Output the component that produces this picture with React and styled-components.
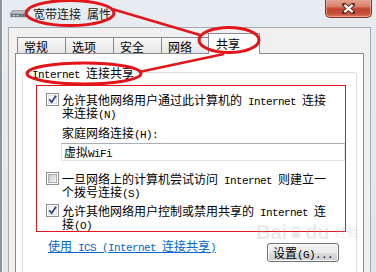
import React from "react";
import styled, { createGlobalStyle } from "styled-components";

const GlobalStyle = createGlobalStyle`
  html, body {
    margin: 0;
    padding: 0;
    background: #ffffff;
  }
  body {
    font-family: "Noto Sans CJK SC", "Liberation Sans", sans-serif;
    font-size: 12px;
    color: #000;
  }
`;

const Window = styled.div`
  position: relative;
  width: 376px;
  height: 272px;
  overflow: hidden;
  display: flex;
  flex-direction: column;
  background: linear-gradient(to bottom, #e7ecf1, #dfe5eb);
  box-shadow: inset 2px 0 0 #8e949b, inset 3px 0 0 #f4f6f8;
`;

const TitleBar = styled.div`
  height: 27px;
  display: flex;
  align-items: flex-start;
  flex: none;
`;

const AppIconSvg = styled.svg`
  margin-left: 10px;
  margin-top: 10px;
  flex: none;
`;

const TitleText = styled.div`
  margin-left: 3px;
  margin-top: 7px;
  font-size: 12px;
  line-height: 13px;
  color: #1a1a1a;
`;

const CloseButton = styled.div`
  margin-left: auto;
  margin-right: 4px;
  margin-top: -1px;
  width: 47px;
  height: 19px;
  box-sizing: border-box;
  border: 1px solid #8a3424;
  border-top: none;
  border-radius: 0 0 5px 5px;
  background: linear-gradient(
    to bottom,
    #e7a797 0%,
    #d8826d 40%,
    #c2442f 55%,
    #c64f3a 80%,
    #d77b63 100%
  );
  box-shadow: inset 0 0 0 1px rgba(255, 210, 200, 0.45);
  display: flex;
  align-items: center;
  justify-content: center;
`;

const Client = styled.div`
  flex: 1;
  min-height: 0;
  margin: 0 5px 0 8px;
  border: 1px solid #a3abb4;
  border-bottom: none;
  background: #f0f0f0;
  padding: 5px 6px 0 6px;
  display: flex;
  flex-direction: column;
`;

const TabRow = styled.div`
  height: 21px;
  display: flex;
  align-items: flex-start;
  padding-left: 2px;
  margin-bottom: -1px;
  position: relative;
  z-index: 1;
  flex: none;
`;

const Tab = styled.div`
  box-sizing: border-box;
  width: ${p => (p.$active ? "52px" : "49px")};
  height: ${p => (p.$active ? "21px" : "16px")};
  margin-top: ${p => (p.$active ? "0" : "4px")};
  margin-left: ${p => (p.$first ? "0" : p.$active ? "-2px" : "-1px")};
  padding: ${p => (p.$active ? "3px 0 0 7px" : "2px 0 0 6px")};
  border: 1px solid #898c95;
  border-bottom: none;
  background: ${p =>
    p.$active ? "#ffffff" : "linear-gradient(to bottom, #f7f7f7, #e6e6e6)"};
  position: relative;
  z-index: ${p => (p.$active ? 2 : 1)};
  font-size: 12px;
  line-height: 13px;
  white-space: nowrap;
`;

const Panel = styled.div`
  flex: 1;
  min-height: 0;
  background: #ffffff;
  border: 1px solid #898c95;
  border-bottom: none;
  padding: 12px 6px 0 6px;
`;

const GroupBox = styled.fieldset`
  margin: 0;
  padding: 0;
  min-width: 0;
  border: 1px solid #d5dfe5;
  border-radius: 3px;
`;

const Legend = styled.legend`
  margin-left: 7px;
  padding: 0 2px;
  font-size: 12px;
  line-height: 13px;
`;

const GroupBody = styled.div`
  padding: 6px 10px 30px 13px;
`;

const Highlight = styled.div`
  border: 1px solid #e3151b;
  padding: 7px 0 1px 9px;
`;

const OptionRow = styled.div`
  display: flex;
  align-items: flex-start;
  gap: 3px;
  margin-top: ${p => p.$gap || 0}px;
`;

const OptionText = styled.div`
  width: 270px;
  line-height: 13px;
  font-size: 12px;
`;

const CheckFrame = styled.span`
  position: relative;
  flex: none;
  box-sizing: border-box;
  width: 13px;
  height: 13px;
  padding: 1px;
  border: 1px solid #8e8f8f;
  background: #ffffff;
  display: flex;
`;

const CheckFill = styled.span`
  flex: 1;
  border: 1px solid ${p => (p.$checked ? "#dcdfe3" : "#a9acb0")};
  background: ${p =>
    p.$checked
      ? "#fafafa"
      : "linear-gradient(135deg, #c6c8cc 0%, #e3e4e6 60%, #f6f6f6 100%)"};
`;

const Tick = styled.svg`
  position: absolute;
  left: 0;
  top: 0;
`;

const SubBlock = styled.div`
  margin-left: 16px;
  margin-top: 7px;
`;

const FieldLabel = styled.div`
  line-height: 13px;
`;

const ComboInput = styled.div`
  margin-top: 4px;
  height: 18px;
  box-sizing: border-box;
  margin-left: -1px;
  border: 1px solid #e2e6ea;
  border-top-color: #abadb3;
  border-left-color: #dbdfe6;
  padding-left: 2px;
  line-height: 15px;
  background: #ffffff;
`;

const Footer = styled.div`
  display: flex;
  align-items: flex-start;
  margin-top: 7px;
  padding-left: 12px;
`;

const Link = styled.a`
  color: #0066cc;
  text-decoration: underline;
  line-height: 13px;
  cursor: pointer;
`;

const Button = styled.button`
  margin-left: auto;
  margin-right: 7px;
  margin-top: 4px;
  width: 72px;
  height: 19px;
  padding: 0;
  border: 1px solid #707070;
  border-radius: 3px;
  background: linear-gradient(
    to bottom,
    #f2f2f2 0%,
    #ebebeb 50%,
    #dddddd 51%,
    #cfcfcf 100%
  );
  box-shadow: inset 0 0 0 1px #fcfcfc;
  font-family: "Noto Sans CJK SC", "Liberation Sans", sans-serif;
  font-size: 12px;
  line-height: 15px;
  color: #000;
`;

const Mono = styled.span`
  font-family: "Liberation Mono", "DejaVu Sans Mono", monospace;
  font-size: 11px;
  line-height: 0;
  letter-spacing: -0.6px;
  white-space: pre;
`;

const Overlay = styled.svg`
  position: absolute;
  left: 0;
  top: 0;
  pointer-events: none;
  z-index: 5;
`;

const Watermark = styled.div`
  position: absolute;
  left: 256px;
  top: 222px;
  display: flex;
  align-items: center;
  gap: 2px;
  color: rgba(170, 170, 170, 0.25);
  pointer-events: none;
  z-index: 4;
`;

const MarkLatin = styled.span`
  font-family: "Liberation Sans", sans-serif;
  font-weight: bold;
  font-size: 20px;
  line-height: 20px;
`;

const MarkCjk = styled.span`
  font-size: 12px;
  line-height: 14px;
  margin-left: 3px;
`;

function AppIcon() {
  return (
    <AppIconSvg width="20" height="8" viewBox="0 0 20 8">
      <polygon points="3,0 20,0 17,4 0,4" fill="#b9c0c8" stroke="#7d8690" strokeWidth="0.8" />
      <rect x="0.5" y="4" width="16.5" height="3.2" fill="#6f7983" />
      <rect x="3" y="5" width="2" height="1.2" fill="#cfe7c2" />
      <rect x="6.5" y="5" width="2" height="1.2" fill="#cfe7c2" />
    </AppIconSvg>
  );
}

function CheckBox({ checked }) {
  return (
    <CheckFrame>
      <CheckFill $checked={checked} />
      {checked && (
        <Tick width="11" height="11" viewBox="0 0 11 11">
          <path
            d="M2.4 5.3 L4.6 8.2 L9 1.8"
            fill="none"
            stroke="#2e4282"
            strokeWidth="1.8"
            strokeLinejoin="round"
          />
        </Tick>
      )}
    </CheckFrame>
  );
}

const tabs = ["常规", "选项", "安全", "网络", "共享"];

export default function App() {
  return (
    <>
      <GlobalStyle />
      <Window>
        <TitleBar>
          <AppIcon />
          <TitleText>
            宽带连接<Mono> </Mono>属性
          </TitleText>
          <CloseButton>
            <svg width="13" height="11" viewBox="0 0 13 11">
              <path d="M2 1.5 L11 9.5 M11 1.5 L2 9.5" stroke="#5d2219" strokeWidth="4" strokeLinecap="round" />
              <path d="M2.3 1.8 L10.7 9.2 M10.7 1.8 L2.3 9.2" stroke="#ffffff" strokeWidth="2.2" />
            </svg>
          </CloseButton>
        </TitleBar>
        <Client>
          <TabRow>
            {tabs.map((t, i) => (
              <Tab key={t} $first={i === 0} $active={t === "共享"}>
                {t}
              </Tab>
            ))}
          </TabRow>
          <Panel>
            <GroupBox>
              <Legend>
                <Mono>Internet </Mono>连接共享
              </Legend>
              <GroupBody>
                <Highlight>
                  <OptionRow>
                    <CheckBox checked />
                    <OptionText>
                      允许其他网络用户通过此计算机的<Mono> Internet </Mono>连接来连接<Mono>(N)</Mono>
                    </OptionText>
                  </OptionRow>
                  <SubBlock>
                    <FieldLabel>
                      家庭网络连接<Mono>(H):</Mono>
                    </FieldLabel>
                    <ComboInput>
                      虚拟<Mono>WiFi</Mono>
                    </ComboInput>
                  </SubBlock>
                  <OptionRow $gap={11}>
                    <CheckBox />
                    <OptionText>
                      一旦网络上的计算机尝试访问<Mono> Internet </Mono>则建立一个拨号连接<Mono>(S)</Mono>
                    </OptionText>
                  </OptionRow>
                  <OptionRow $gap={6}>
                    <CheckBox checked />
                    <OptionText>
                      允许其他网络用户控制或禁用共享的<Mono> Internet </Mono>连接<Mono>(O)</Mono>
                    </OptionText>
                  </OptionRow>
                </Highlight>
                <Footer>
                  <Link>
                    使用<Mono> ICS (Internet </Mono>连接共享<Mono>)</Mono>
                  </Link>
                  <Button>
                    设置<Mono>(G)...</Mono>
                  </Button>
                </Footer>
              </GroupBody>
            </GroupBox>
          </Panel>
        </Client>

        <Watermark>
          <MarkLatin>Bai</MarkLatin>
          <svg width="14" height="14" viewBox="0 0 14 14" fill="rgba(170,170,170,0.25)">
            <ellipse cx="7" cy="10" rx="4" ry="3.2" />
            <circle cx="2.5" cy="6" r="1.6" />
            <circle cx="5.2" cy="3" r="1.6" />
            <circle cx="8.8" cy="3" r="1.6" />
            <circle cx="11.5" cy="6" r="1.6" />
          </svg>
          <MarkLatin>du</MarkLatin>
          <MarkCjk>经验</MarkCjk>
        </Watermark>

        <Overlay width="376" height="272" viewBox="0 0 376 272">
          <g fill="none" stroke="#e2151b" strokeWidth="3">
            <ellipse cx="70" cy="13" rx="44" ry="12.5" />
            <ellipse cx="229" cy="40" rx="30" ry="12.5" />
            <ellipse cx="84" cy="73.5" rx="57" ry="10.5" />
          </g>
          <g stroke="#e2151b" strokeWidth="2.5">
            <line x1="112" y1="9" x2="200" y2="35" />
            <line x1="139" y1="72" x2="224" y2="54" />
          </g>
        </Overlay>
      </Window>
    </>
  );
}
